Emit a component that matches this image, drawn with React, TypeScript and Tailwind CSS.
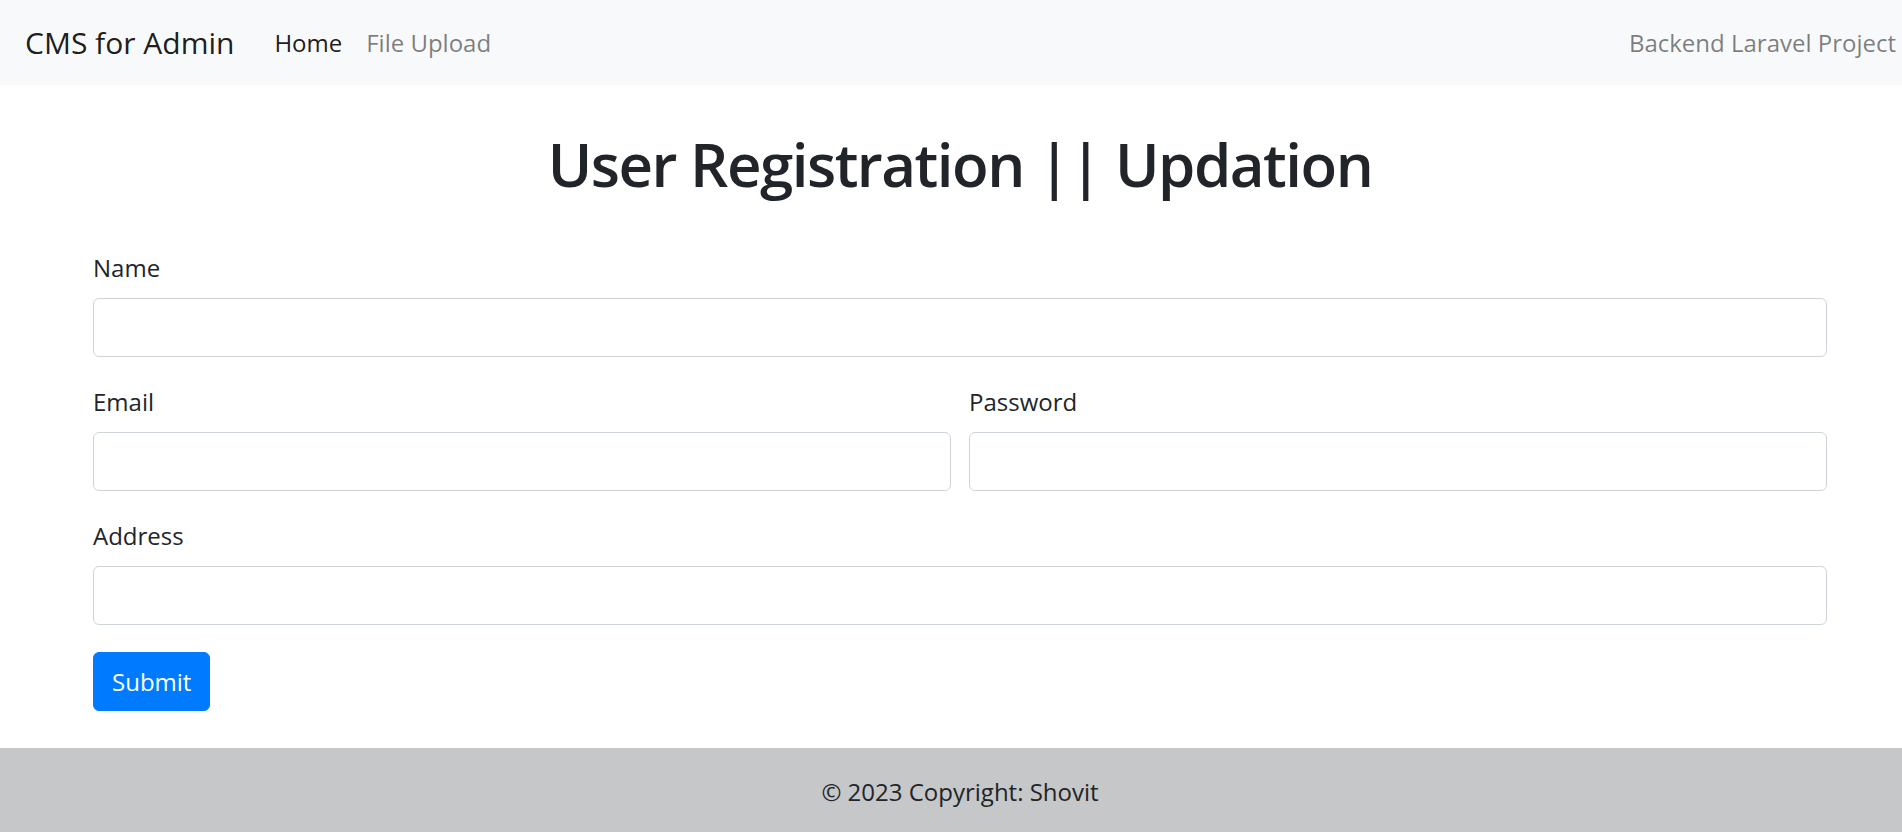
import React, { useState } from "react";

const fontStack = { fontFamily: '"Open Sans", "Noto Sans", Arial, sans-serif' };

type FieldProps = {
  label: string;
  type?: string;
  value: string;
  onChange: (v: string) => void;
};

const Field: React.FC<FieldProps> = ({ label, type = "text", value, onChange }) => (
  <div className="mb-[27px] flex-1">
    <label className="block text-[24px] leading-[36px] mb-[12px] text-[#212529]">{label}</label>
    <input
      type={type}
      value={value}
      onChange={(e) => onChange(e.target.value)}
      className="block w-full h-[59px] px-[18px] text-[24px] text-[#495057] bg-white border-[1.5px] border-[#ced4da] rounded-[6px] outline-none focus:border-[#80bdff]"
    />
  </div>
);

export default function App() {
  const [form, setForm] = useState({ name: "", email: "", password: "", address: "" });

  const update = (key: keyof typeof form) => (v: string) => setForm({ ...form, [key]: v });

  return (
    <div className="w-full overflow-hidden bg-white" style={fontStack}>
      <div className="w-[1920px] flex flex-col min-h-[832px]">
        {/* navbar */}
        <nav className="bg-[#f8f9fa] h-[85px] flex items-center pl-[25px] pr-[24px]">
          <a className="text-[30px] leading-[45px] mr-[28px] text-[rgba(0,0,0,0.9)]">CMS for Admin</a>
          <ul className="flex items-center">
            <li>
              <a className="px-[12px] text-[24px] leading-[36px] text-[rgba(0,0,0,0.9)]">Home</a>
            </li>
            <li>
              <a className="px-[12px] text-[24px] leading-[36px] text-[rgba(0,0,0,0.5)]">File Upload</a>
            </li>
          </ul>
          <span className="ml-auto text-[24px] leading-[36px] text-[rgba(0,0,0,0.5)]">Backend Laravel Project</span>
        </nav>

        {/* form */}
        <main className="flex-1 w-[1734px] mx-auto pt-[43px] pb-[37px]">
          <h1 className="text-center text-[60px] leading-[72px] font-semibold tracking-[-1.5px] text-[#212529]">
            User Registration || Updation
          </h1>
          <form className="mt-[50px]" onSubmit={(e) => e.preventDefault()}>
            <Field label="Name" value={form.name} onChange={update("name")} />
            <div className="flex gap-[18px]">
              <Field label="Email" type="email" value={form.email} onChange={update("email")} />
              <Field label="Password" type="password" value={form.password} onChange={update("password")} />
            </div>
            <Field label="Address" value={form.address} onChange={update("address")} />
            <button
              type="submit"
              className="h-[59px] px-[18px] text-[24px] leading-[36px] text-white bg-[#007bff] border-[1.5px] border-[#007bff] rounded-[6px]"
            >
              Submit
            </button>
          </form>
        </main>

        {/* footer */}
        <footer className="bg-[#c6c7c8] h-[84px] flex items-center justify-center pt-[4px] text-[24px] text-[#212529]">
          © 2023 Copyright: Shovit
        </footer>
      </div>
    </div>
  );
}
